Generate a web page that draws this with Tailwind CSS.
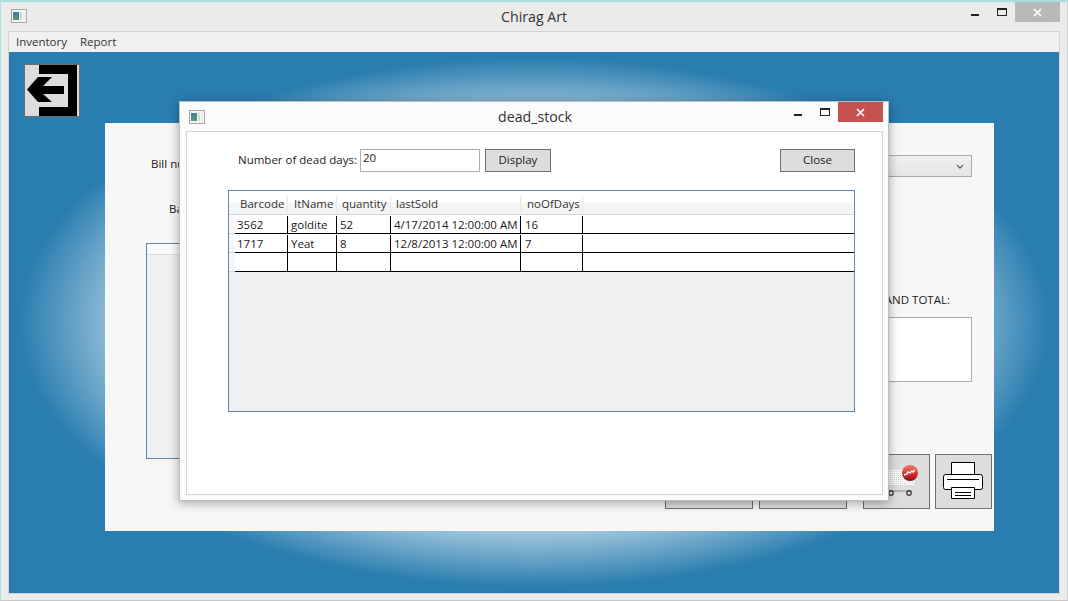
<!DOCTYPE html>
<html>
<head>
<meta charset="utf-8">
<title>Chirag Art</title>
<script src="https://cdn.jsdelivr.net/npm/@tailwindcss/browser@4"></script>
</head>
<body class="w-[1068px] h-[601px] overflow-hidden bg-[#ebebeb] font-['Open_Sans','Noto_Sans',sans-serif] text-[11.5px] text-[#1a1a1a]">
  <div class="relative w-[1068px] h-[601px] border-t-2 border-l border-r border-b border-t-[#a8e0dc] border-l-[#a8e0dc] border-r-[#d0d0d0] border-b-[#c8c8c8] flex flex-col">
    <!-- Main window title bar -->
    <div class="h-[29px] flex items-start">
      <svg class="ml-[10px] mt-[7px] shrink-0" width="16" height="14" viewBox="0 0 16 14"><defs><linearGradient id="ic" x1="0" y1="0" x2="0" y2="1"><stop offset="0" stop-color="#3a7ea8"/><stop offset="1" stop-color="#5c9a6c"/></linearGradient></defs><rect x="0.5" y="0.5" width="15" height="13" fill="#f4f4f4" stroke="#a8a8a8"/><rect x="2" y="3" width="6" height="8" fill="url(#ic)"/><rect x="9" y="3" width="2" height="8" fill="#cde0d8"/><rect x="12" y="3" width="2" height="8" fill="#e6eeea"/></svg>
      <div class="text-[14.2px] leading-[20px] mt-[5px] text-[#333] ml-[474px] whitespace-nowrap">Chirag Art</div>
      <div class="flex items-start ml-auto mr-[7px]">
        <div class="w-[8px] h-[2px] bg-[#222] mt-[12px] mr-[18px]"></div>
        <div class="w-[10px] h-[8px] border border-[#222] border-t-2 mt-[6px] mr-[8px]"></div>
        <div class="w-[45px] h-[20px] bg-[#b9b9b9] flex items-center justify-center">
          <svg width="9" height="9" viewBox="0 0 9 9"><path d="M1 1l7 7M8 1l-7 7" stroke="#fff" stroke-width="1.6"/></svg>
        </div>
      </div>
    </div>

    <!-- Main window client -->
    <div class="ml-[7px] mr-[7px] mb-[6px] flex-1 border border-[#d4d4d4] flex flex-col">
      <div class="h-[20px] bg-[#f0f0f0] flex items-center pl-[7px] gap-[13px] text-[#333]">
        <span>Inventory</span>
        <span>Report</span>
      </div>
      <div class="flex-1 bg-[#2a7db0] bg-[radial-gradient(515px_265px_at_center,#ffffff_55%,#a0c6dc_79%,#2a7db0_100%)] pl-[15px] pt-[12px] flex items-start">
        <!-- Back button -->
        <div class="w-[56px] h-[53px] bg-[#dddddd] border border-[#707070] shrink-0">
          <svg width="54" height="51" viewBox="0 0 54 51"><path d="M14 0h38v51H14V42h29V9H14z" fill="#000"/><path d="M2 24.500L13 12h14l-9 9h21v8H18l9 8H13z" fill="#000"/></svg>
        </div>
        <!-- Billing panel behind the dialog -->
        <div class="ml-[25px] mt-[59px] w-[889px] h-[408px] bg-[#f7f7f7] flex justify-between">
          <div class="pl-[41px] pt-[33px] flex flex-col">
            <span class="leading-[16px] ml-[5px]">Bill nu</span>
            <span class="leading-[16px] mt-[29px] ml-[23px]">Ba</span>
            <div class="mt-[26px] w-[120px] h-[216px] border border-[#5f87b0] bg-[#f0f0f0]">
              <div class="h-[11px] bg-[#fafafa] border-b border-[#ddd]"></div>
            </div>
          </div>
          <div class="pr-[2px] flex flex-col items-end">
            <div class="mt-[32px] mr-[20px] w-[100px] h-[22px] border border-[#acacac] bg-[linear-gradient(#f0f0f0,#e5e5e5)] flex items-center justify-end pr-[7px]">
              <svg width="8" height="5" viewBox="0 0 8 5"><path d="M1 1l3 3 3-3" fill="none" stroke="#666" stroke-width="1.3"/></svg>
            </div>
            <div class="mt-[115px] mr-[42px] leading-[16px] text-right whitespace-nowrap">GRAND TOTAL:</div>
            <div class="mt-[9px] mr-[20px] w-[100px] h-[65px] bg-white border border-[#acacac]"></div>
            <div class="mt-[72px] flex">
              <div class="w-[88px] h-[55px] bg-[#dddddd] border border-[#707070] mr-[6px]"></div>
              <div class="w-[88px] h-[55px] bg-[#dddddd] border border-[#707070] mr-[16px]"></div>
              <div class="w-[67px] h-[55px] bg-[#dddddd] border border-[#707070] mr-[5px]">
                <svg width="65" height="53" viewBox="0 0 65 53">
                  <defs>
                    <pattern id="chk" width="2" height="2" patternUnits="userSpaceOnUse"><rect width="2" height="2" fill="#fafafa"/><rect width="1" height="1" fill="#d0d0d0"/></pattern>
                    <linearGradient id="ball" x1="0" y1="0" x2="0" y2="1"><stop offset="0" stop-color="#f27a7a"/><stop offset="0.55" stop-color="#d83434"/><stop offset="1" stop-color="#8e0c0c"/></linearGradient>
                  </defs>
                  <path d="M15 15h35v15H15z" fill="url(#chk)"/>
                  <path d="M18 36h30" stroke="#8a8a8a"/>
                  <circle cx="27" cy="38" r="2.200" fill="none" stroke="#444" stroke-width="1.400"/>
                  <circle cx="45" cy="38" r="2.200" fill="none" stroke="#444" stroke-width="1.400"/>
                  <circle cx="46" cy="18" r="8" fill="url(#ball)"/>
                  <path d="M40 20l3-1 1-2 2 1 2-2 1 1 2-2" fill="none" stroke="#fff" stroke-width="1.400"/>
                </svg>
              </div>
              <div class="w-[57px] h-[55px] bg-[#dddddd] border border-[#707070]">
                <svg width="55" height="53" viewBox="0 0 55 53"><path d="M15.500 7.500h23v12h-23z" fill="#fff" stroke="#000"/><path d="M9.500 19.500h35a2 2 0 0 1 2 2v11a2 2 0 0 1-2 2h-35a2 2 0 0 1-2-2v-11a2 2 0 0 1 2-2z" fill="#fff" stroke="#000"/><path d="M11 24.500h32" stroke="#000"/><path d="M15.500 32.500h23v11h-23z" fill="#fff" stroke="#000"/><path d="M19 37.500h16M19 40.500h16" stroke="#000"/></svg>
              </div>
            </div>
          </div>
        </div>
      </div>
    </div>

    <!-- dead_stock dialog -->
    <div class="absolute left-[178px] top-[99px] w-[710px] h-[400px] bg-[#fbfbfb] border border-[#b5c0c6] shadow-[0_2px_10px_rgba(0,0,0,0.35)] flex flex-col">
      <div class="h-[29px] flex items-start shrink-0">
        <svg class="ml-[9px] mt-[8px] shrink-0" width="16" height="14" viewBox="0 0 16 14"><rect x="0.5" y="0.5" width="15" height="13" fill="#f4f4f4" stroke="#a8a8a8"/><rect x="2" y="3" width="6" height="8" fill="url(#ic)"/><rect x="9" y="3" width="2" height="8" fill="#cde0d8"/><rect x="12" y="3" width="2" height="8" fill="#e6eeea"/></svg>
        <div class="text-[14.2px] leading-[20px] mt-[5px] text-[#333] ml-[293px] whitespace-nowrap">dead_stock</div>
        <div class="flex items-start ml-auto mr-[5px]">
          <div class="w-[8px] h-[2px] bg-[#222] mt-[12px] mr-[18px]"></div>
          <div class="w-[10px] h-[8px] border border-[#222] border-t-2 mt-[6px] mr-[8px]"></div>
          <div class="w-[45px] h-[20px] bg-[#c75050] flex items-center justify-center">
            <svg width="9" height="9" viewBox="0 0 9 9"><path d="M1 1l7 7M8 1l-7 7" stroke="#fff" stroke-width="1.6"/></svg>
          </div>
        </div>
      </div>
      <div class="ml-[6px] mr-[5px] mb-[5px] flex-1 bg-white border border-[#d4d4d4] pt-[16px] pl-[41px] pr-[27px]">
        <div class="flex items-center h-[24px]">
          <span class="ml-[10px] whitespace-nowrap">Number of dead days:</span>
          <div class="ml-[3px] w-[120px] h-[23px] border border-[#acacac] bg-white pl-[2px] leading-[16px]">20</div>
          <div class="ml-[5px] w-[66px] h-[23px] bg-[#dddddd] border border-[#707070] flex items-center justify-center">Display</div>
          <div class="ml-auto w-[75px] h-[23px] bg-[#dddddd] border border-[#707070] flex items-center justify-center">Close</div>
        </div>
        <!-- Data grid -->
        <div class="mt-[18px] w-[627px] h-[222px] border border-[#5f87b0] bg-[#efefef] flex flex-col">
          <div class="h-[21px] bg-[linear-gradient(#ffffff,#ffffff_45%,#f5f5f5_55%,#f3f3f3)] flex pl-[6px] pt-[2px] items-center border-b border-[#d5d5d5] box-content text-[#333]">
            <div class="w-[53px] pl-[5px] border-r border-[#e8e8e8]">Barcode</div>
            <div class="w-[49px] pl-[6px] border-r border-[#e8e8e8]">ItName</div>
            <div class="w-[54px] pl-[5px] border-r border-[#e8e8e8]">quantity</div>
            <div class="w-[130px] pl-[5px] border-r border-[#e8e8e8]">lastSold</div>
            <div class="w-[62px] pl-[6px] border-r border-[#e8e8e8]">noOfDays</div>
          </div>
          <div class="flex flex-col">
            <div class="flex h-[19px]">
              <div class="w-[6px] bg-[#f8f8f8] border-b border-[#d5d5d5]"></div>
              <div class="flex-1 bg-white border-b border-black flex pt-px leading-[18px]">
                <div class="w-[53px] border-r border-black pl-[2px]">3562</div>
                <div class="w-[49px] border-r border-black pl-[3px]">goldite</div>
                <div class="w-[54px] border-r border-black pl-[3px]">52</div>
                <div class="w-[130px] border-r border-black pl-[3px] whitespace-nowrap">4/17/2014 12:00:00 AM</div>
                <div class="w-[62px] border-r border-black pl-[4px]">16</div>
              </div>
            </div>
            <div class="flex h-[19px]">
              <div class="w-[6px] bg-[#f8f8f8] border-b border-[#d5d5d5]"></div>
              <div class="flex-1 bg-white border-b border-black flex pt-px leading-[18px]">
                <div class="w-[53px] border-r border-black pl-[2px]">1717</div>
                <div class="w-[49px] border-r border-black pl-[3px]">Yeat</div>
                <div class="w-[54px] border-r border-black pl-[3px]">8</div>
                <div class="w-[130px] border-r border-black pl-[3px] whitespace-nowrap">12/8/2013 12:00:00 AM</div>
                <div class="w-[62px] border-r border-black pl-[4px]">7</div>
              </div>
            </div>
            <div class="flex h-[19px]">
              <div class="w-[6px] bg-[#f8f8f8] border-b border-[#d5d5d5]"></div>
              <div class="flex-1 bg-white border-b border-black flex">
                <div class="w-[53px] border-r border-black"></div>
                <div class="w-[49px] border-r border-black"></div>
                <div class="w-[54px] border-r border-black"></div>
                <div class="w-[130px] border-r border-black"></div>
                <div class="w-[62px] border-r border-black"></div>
              </div>
            </div>
          </div>
        </div>
      </div>
    </div>
  </div>
</body>
</html>
